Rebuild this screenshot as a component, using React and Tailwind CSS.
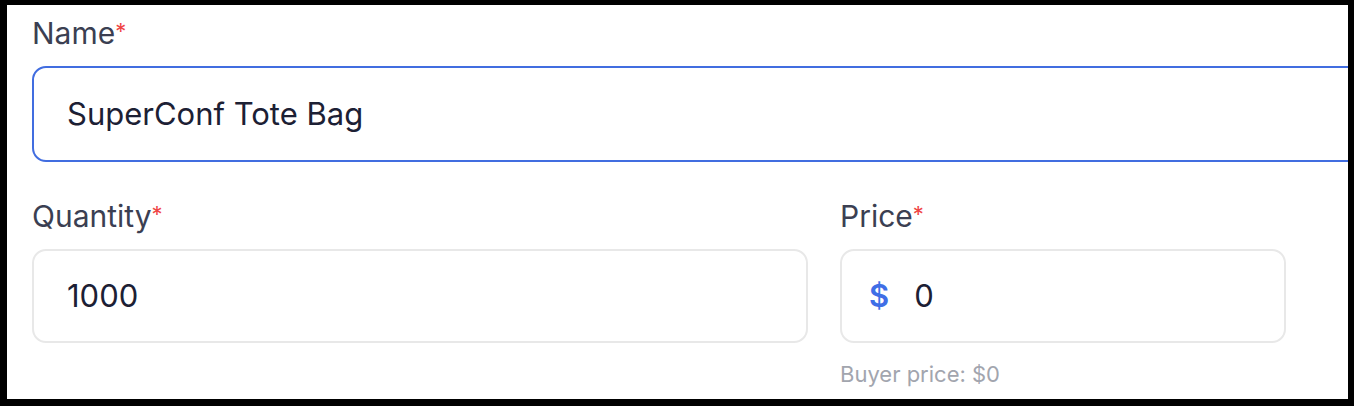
import React from 'react';

const font = { fontFamily: 'Inter, "Noto Sans", sans-serif' };

const Label = ({ children }) => (
  <div className="text-[30px] leading-[36px] text-[#3b3f52]">
    {children}
    <span className="text-[#ef4444] text-[22px] align-top relative -top-[2px]">*</span>
  </div>
);

export default function App() {
  return (
    <div className="bg-black h-[406px] w-[1354px] pt-[5px] pl-[7px] pr-[6px] pb-[7px]" style={font}>
      <div className="bg-white h-full overflow-hidden pt-[10px] pl-[25px]">
        {/* Name */}
        <Label>Name</Label>
        <div className="mt-[15px] w-[1400px] h-[96px] border-2 border-[#416de0] rounded-[14px] flex items-center pl-[33px]">
          <span className="text-[31px] text-[#1c2034]">SuperConf Tote Bag</span>
        </div>

        <div className="flex gap-[32px] mt-[36px]">
          {/* Quantity */}
          <div className="w-[776px]">
            <Label>Quantity</Label>
            <div className="mt-[15px] h-[94px] border-2 border-[#e8e8e8] rounded-[14px] flex items-center pl-[33px]">
              <span className="text-[31px] text-[#1c2034]">1000</span>
            </div>
          </div>

          {/* Price */}
          <div className="w-[446px]">
            <Label>Price</Label>
            <div className="mt-[15px] h-[94px] border-2 border-[#e8e8e8] rounded-[14px] flex items-center pl-[27px]">
              <span className="text-[31px] font-semibold text-[#3f6ee6]">$</span>
              <span className="ml-[25px] text-[31px] text-[#1c2034]">0</span>
            </div>
            <div className="mt-[17px] text-[22px] leading-[28px] text-[#a2a5ae]">Buyer price: $0</div>
          </div>
        </div>
      </div>
    </div>
  );
}
